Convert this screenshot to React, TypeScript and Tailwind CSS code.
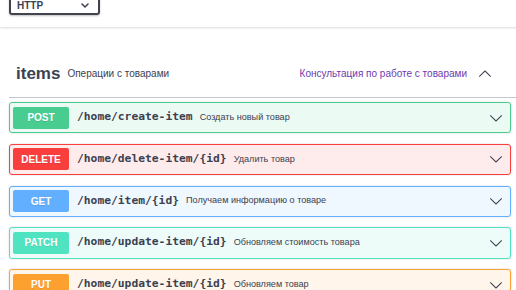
import React from "react";

const ops = [
  { m: "POST", path: "/home/create-item", desc: "Создать новый товар", c: "#49cc90", bg: "rgba(73,204,144,0.1)" },
  { m: "DELETE", path: "/home/delete-item/{id}", desc: "Удалить товар", c: "#f93e3e", bg: "rgba(249,62,62,0.1)" },
  { m: "GET", path: "/home/item/{id}", desc: "Получаем информацию о товаре", c: "#61affe", bg: "rgba(97,175,254,0.1)" },
  { m: "PATCH", path: "/home/update-item/{id}", desc: "Обновляем стоимость товара", c: "#50e3c2", bg: "rgba(80,227,194,0.1)" },
  { m: "PUT", path: "/home/update-item/{id}", desc: "Обновляем товар", c: "#fca130", bg: "rgba(252,161,48,0.1)" },
];

function Chevron({ up = false }: { up?: boolean }) {
  return (
    <svg width="14" height="14" viewBox="0 0 20 20" style={{ transform: up ? "rotate(180deg)" : undefined }}>
      <path
        fill="#3b4151"
        d="M17.418 6.109c.272-.268.709-.268.979 0s.271.701 0 .969l-7.908 7.83c-.27.268-.707.268-.979 0l-7.908-7.83c-.27-.268-.27-.701 0-.969.271-.268.709-.268.979 0L10 13.25l7.418-7.141z"
      />
    </svg>
  );
}

export default function App() {
  const sans = { fontFamily: '"Liberation Sans", Arial, sans-serif' };
  return (
    <div className="w-[516px] h-[290px] overflow-hidden bg-white" style={sans}>
      <div className="h-[35px] bg-white shadow-[0_1px_2px_0_rgba(0,0,0,0.15)] relative z-10 pl-[9px]">
        <div className="w-[91px] h-[23px] -mt-[8px] border-2 border-[#41444e] rounded-[3px] flex items-center justify-between pl-[6px] pr-[9px] pt-[4px] shadow-[0_1px_2px_0_rgba(0,0,0,0.25)]">
          <span className="text-[10px] font-bold text-[#3b4151] leading-none">HTTP</span>
          <svg width="8" height="5" viewBox="0 0 8 5">
            <path d="M1 1l3 3 3-3" fill="none" stroke="#3b4151" strokeWidth="1.5" strokeLinecap="round" strokeLinejoin="round" />
          </svg>
        </div>
      </div>
      <div className="pl-[9px] pt-[23px]">
        <div className="h-[48px] flex items-center border-b border-[rgba(59,65,81,0.3)] pl-[7px] pr-[24px]">
          <span className="text-[17px] font-bold text-[#3b4151] leading-none">items</span>
          <span className="text-[10px] text-[#3b4151] ml-[7px] leading-none">Операции с товарами</span>
          <span className="flex-1" />
          <span className="text-[10px] text-[#6e3bad] leading-none mr-[11px]">Консультация по работе с товарами</span>
          <Chevron up />
        </div>
        <div className="pt-[4px] mr-[5px]">
          {ops.map((o, i) => (
            <div
              key={i}
              className="h-[31.25px] mb-[10.5px] border rounded-[3px] flex items-center pl-[3px] pr-[7px] shadow-[0_0_2px_rgba(0,0,0,0.19)]"
              style={{ borderColor: o.c, background: o.bg }}
            >
              <div
                className="w-[56px] h-[22px] rounded-[2px] flex items-center justify-center text-white font-bold text-[10px] shrink-0 [text-shadow:0_1px_0_rgba(0,0,0,0.1)]"
                style={{ background: o.c }}
              >
                {o.m}
              </div>
              <span
                className="ml-[8px] text-[11.3px] font-bold text-[#3b4151] whitespace-nowrap"
                style={{ fontFamily: '"DejaVu Sans Mono", monospace' }}
              >
                {o.path}
              </span>
              <span className="ml-[7px] text-[9.1px] text-[#3b4151] whitespace-nowrap">{o.desc}</span>
              <span className="flex-1" />
              <Chevron />
            </div>
          ))}
        </div>
      </div>
    </div>
  );
}
